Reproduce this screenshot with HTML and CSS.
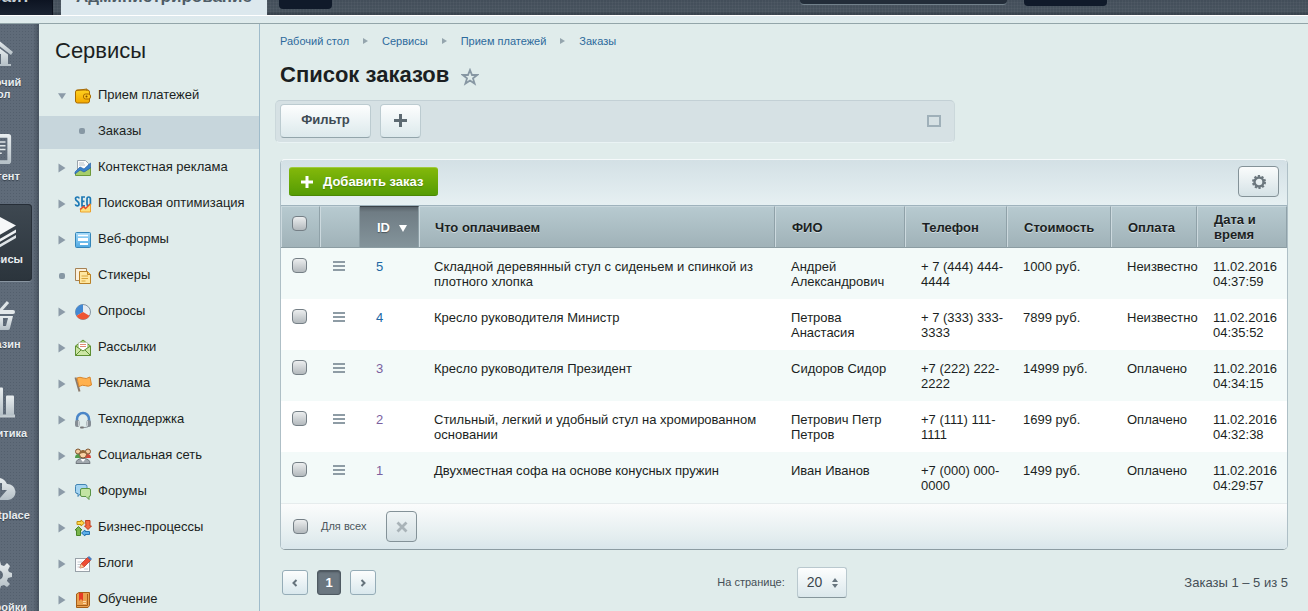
FILE: index.html
```html
<!DOCTYPE html>
<html lang="ru">
<head>
<meta charset="utf-8">
<title>Список заказов</title>
<link rel="stylesheet" href="styles.css">
</head>
<body>
<svg class="defs" aria-hidden="true">
  <defs>
    <linearGradient id="metal" x1="0" y1="0" x2="0" y2="1"><stop offset="0" stop-color="#e9eef0"/><stop offset="1" stop-color="#b4bfc6"/></linearGradient>
    <linearGradient id="gold" x1="0" y1="0" x2="0" y2="1"><stop offset="0" stop-color="#ffd21f"/><stop offset="1" stop-color="#f3a800"/></linearGradient>
    <linearGradient id="sky" x1="0" y1="0" x2="0" y2="1"><stop offset="0" stop-color="#a5dafa"/><stop offset="1" stop-color="#4fa9e2"/></linearGradient>
    <symbol id="tri" viewBox="0 0 8 10"><path d="M0.500 0.500 7.500 5 0.500 9.500Z" fill="#8c9ba8"/></symbol>
  </defs>
</svg>

<header class="top">
  <div class="top-bar">
    <a class="tab tab-site" href="#">Сайт</a>
    <a class="tab tab-admin" href="#">Администрирование</a>
    <span class="slot slot-note"></span>
    <span class="slot slot-search"></span>
    <span class="slot slot-user"></span>
  </div>
  <div class="top-strip"></div>
</header>

<div class="layout">
  <nav class="rail" aria-label="Разделы">
    <a class="rail-item" href="#">
      <svg class="rail-icon h34" width="30" height="26" viewBox="0 0 30 26"><path d="M15 0 30 12 28 15 15 5 2 15 0 12Z" fill="url(#metal)"/><path fill-rule="evenodd" d="M5 14.500 15 7l10 7.500V24h3v2H2v-2h3zM11 24h7V14h-7z" fill="url(#metal)"/></svg>
      <span>Рабочий стол</span>
    </a>
    <a class="rail-item" href="#">
      <svg class="rail-icon h30" width="28" height="32" viewBox="0 0 28 32"><path fill-rule="evenodd" d="M3 0h22q3 0 3 3v26q0 3-3 3H3q-3 0-3-3V3q0-3 3-3zm1 4v24h20V4z" fill="url(#metal)"/><path d="M6 8.500h16M6 12.500h16M6 16.500h16M6 20.500h12" stroke="#dfe5e8" stroke-width="1.600"/></svg>
      <span>Контент</span>
    </a>
    <a class="rail-item active" href="#">
      <svg class="rail-icon h31" width="36" height="31" viewBox="0 0 36 31"><path d="M18 0 36 9.500 18 20 0 9.500Z" fill="#f6f8f9"/><path d="M0 14 18 24 36 13.500v3L18 27 0 17Z" fill="#eef1f3"/><path d="M0 19.500 18 29.500 36 19v3L18 32.500 0 22.500Z" fill="#dde3e6"/></svg>
      <span>Сервисы</span>
    </a>
    <a class="rail-item" href="#">
      <svg class="rail-icon h33" width="34" height="29" viewBox="0 0 34 29"><path d="M6 10 15 1M19 10 27 1" stroke="#dfe5e8" stroke-width="3"/><rect y="9" width="34" height="4" rx="2" fill="#e3e8ea"/><path fill-rule="evenodd" d="M2 15h30l-3 12q0 2-2 2H7q-2 0-2-2zm5 2 2 8h3v-8zm8 0v8h4v-8zm7 0v8h3l2-8z" fill="url(#metal)"/></svg>
      <span>Магазин</span>
    </a>
    <a class="rail-item" href="#">
      <svg class="rail-icon h37" width="34" height="30" viewBox="0 0 34 30"><path d="M1 27h33v3H1z" fill="#c3ccd1"/><rect x="3" y="12" width="8" height="16" rx="1" fill="url(#metal)"/><rect x="14" y="0" width="8" height="28" rx="1" fill="url(#metal)"/><rect x="25" y="8" width="8" height="20" rx="1" fill="url(#metal)"/></svg>
      <span>Аналитика</span>
    </a>
    <a class="rail-item" href="#">
      <svg class="rail-icon h30" width="36" height="24" viewBox="0 0 36 24"><path fill-rule="evenodd" d="M8 24A8 8 0 0 1 7 8 11 11 0 0 1 27 8 7.800 7.800 0 1 1 28 24zM15 7v7h-5l9 9 8-9h-5V7z" fill="url(#metal)"/></svg>
      <span>Marketplace</span>
    </a>
    <a class="rail-item" href="#">
      <svg class="rail-icon h40" width="28" height="28" viewBox="0 0 28 28"><path fill-rule="evenodd" d="M12 0h4l1 4 3 1 3-3 3 3-2 4 1 2 3 1v4l-4 1-1 3 3 3-3 3-3-2-3 1-1 3h-4l-1-3-3-1-3 2-3-3 2-3-1-3-3-1v-4l3-1 1-2-2-4 3-3 3 3 3-1zM14 9a5 5 0 1 0 0 10 5 5 0 0 0 0-10z" fill="url(#metal)"/></svg>
      <span>Настройки</span>
    </a>
  </nav>

  <aside class="side">
    <h2>Сервисы</h2>
    <ul class="menu">
      <li><a href="#"><svg class="mark" width="10" height="8" viewBox="0 0 10 8"><path d="M0 0.500h10L5 8Z" fill="#8c9ba8"/></svg>
        <svg class="ico" viewBox="0 0 18 18"><rect x="1.500" y="3" width="14" height="13" rx="2" fill="url(#gold)" stroke="#a86a00"/><path d="M2 3.500 13 2v2" fill="none" stroke="#a86a00"/><rect x="9.500" y="7" width="7" height="5" rx="2" fill="#ffc61a" stroke="#a86a00"/><circle cx="12.500" cy="9.500" r="1" fill="#7c4c00"/></svg>Прием платежей</a></li>
      <li class="current"><a href="#"><i class="mark-gap"></i><i class="dot"></i>Заказы</a></li>
      <li><a href="#"><svg class="mark" width="8" height="10"><use href="#tri"/></svg>
        <svg class="ico" viewBox="0 0 18 18"><path d="M3.500 1.500h8l3 3v11h-11z" fill="#fbfbfb" stroke="#9aa4ac"/><path d="M5 4h5M5 6h6" stroke="#b9c1c8"/><path d="M1.500 16.500v-3l5-3 4 2 6-4v8z" fill="#a6ce6a" stroke="#6f9a3a"/><path d="M1 13 6 8l4 2 6.500-6v5L10 13 6 11l-5 4z" fill="#3b82cc" stroke="#2a63a6" stroke-width=".7"/></svg>Контекстная реклама</a></li>
      <li><a href="#"><svg class="mark" width="8" height="10"><use href="#tri"/></svg>
        <svg class="ico" viewBox="0 0 18 18"><path d="M5 3.500Q5 2 3.300 2 1.500 2 1.500 3.800 1.500 5.200 3.300 6.300 5 7.500 5 9 5 10.800 3.200 10.800 1.500 10.800 1.400 9.200M11 2H8v8.800h3M8 6.300h2.500M14.700 2q1.700 0 1.700 2v4.800q0 2-1.700 2T13 8.800V4q0-2 1.700-2z" fill="none" stroke="#1c78b4" stroke-width="1.700"/><path d="M6.500 17v-2l3-3 2 1.500L16.500 9v8z" fill="#fddf7c" stroke="#eda22c"/><path d="m6 14.500 3.500-3 2 2L16 9" fill="none" stroke="#e3492b" stroke-width="1.300"/></svg>Поисковая оптимизация</a></li>
      <li><a href="#"><svg class="mark" width="8" height="10"><use href="#tri"/></svg>
        <svg class="ico" viewBox="0 0 18 18"><rect x="1.500" y="1.500" width="15" height="15" rx="1" fill="url(#sky)" stroke="#3485b8"/><path d="M4 4.500h10" stroke="#fff" stroke-width="1.500"/><rect x="4" y="7" width="10" height="3" fill="#fff"/><path d="M6 13h8" stroke="#fff" stroke-width="2"/></svg>Веб-формы</a></li>
      <li><a href="#"><i class="dot"></i>
        <svg class="ico" viewBox="0 0 18 18"><path d="M1.500 1.500h11v12h-11z" fill="#fbf1de" stroke="#a78254"/><path d="M5.500 4.500h8l3 3v9h-11z" fill="#ffe7a0" stroke="#b98127"/><path d="M13.500 4.500v3h3" fill="#ffc74d" stroke="#b98127"/><path d="M7.500 9h6.500M7.500 11.500h6.500M7.500 14h4" stroke="#d8a53c"/></svg>Стикеры</a></li>
      <li><a href="#"><svg class="mark" width="8" height="10"><use href="#tri"/></svg>
        <svg class="ico" viewBox="0 0 18 18"><circle cx="9" cy="9" r="7.500" fill="#e6ecf1" stroke="#8494a2"/><path d="M9 9V1.500A7.500 7.500 0 0 0 2.500 12.700Z" fill="#4389d2"/><path d="M9 9 2.500 12.700A7.500 7.500 0 0 0 15.500 12.700Z" fill="#ee5434"/></svg>Опросы</a></li>
      <li><a href="#"><svg class="mark" width="8" height="10"><use href="#tri"/></svg>
        <svg class="ico" viewBox="0 0 18 18"><path d="M1.500 7 9 1l7.500 6v9.500h-15z" fill="#a8d072" stroke="#5e8f33"/><path d="M4.500 3.500h9v7L9 12l-4.500-2z" fill="#fff" stroke="#b8c2b0" stroke-width=".7"/><path d="M6 5.500h6M6 7.500h6" stroke="#e08b76"/><path d="m1.500 7 7.500 5 7.500-5v9.500h-15z" fill="#cde6a5" stroke="#5e8f33"/><path d="m2 16 5-5M16 16l-5-5" stroke="#5e8f33"/></svg>Рассылки</a></li>
      <li><a href="#"><svg class="mark" width="8" height="10"><use href="#tri"/></svg>
        <svg class="ico" viewBox="0 0 18 18"><path d="m1.500 2.500 4 14" stroke="#8a7a6c" stroke-width="2"/><path d="M3 3q3-1.500 6 0t7-1l1.500 8q-3 2-6 .7t-6.500.8z" fill="#ffb14e" stroke="#d9852a"/></svg>Реклама</a></li>
      <li><a href="#"><svg class="mark" width="8" height="10"><use href="#tri"/></svg>
        <svg class="ico" viewBox="0 0 18 18"><path d="M3 11V8a6 6 0 0 1 12 0v3" fill="none" stroke="#4a86c8" stroke-width="2.500"/><path d="M15 14q0 2.500-5 2.500" fill="none" stroke="#8f979e"/><rect x="1" y="9" width="4.500" height="7" rx="2" fill="#858d94"/><rect x="12.500" y="9" width="4.500" height="7" rx="2" fill="#858d94"/><path d="M4.500 10v5M13.500 10v5" stroke="#c9ced2"/><rect x="6" y="15.500" width="4" height="2" rx="1" fill="#777"/></svg>Техподдержка</a></li>
      <li><a href="#"><svg class="mark" width="8" height="10"><use href="#tri"/></svg>
        <svg class="ico" viewBox="0 0 18 18"><path d="M1 11q0-4 3.500-4T8 11z" fill="#4f9a49"/><path d="M10 11q0-4 3.500-4T17 11z" fill="#d3483a"/><circle cx="4" cy="4.500" r="2.500" fill="#f4c99b" stroke="#7e5632"/><circle cx="14" cy="4.500" r="2.500" fill="#f4c99b" stroke="#7e5632"/><path d="M2 16.500q0-5 7-5t7 5z" fill="#a0a7ad" stroke="#6f767c"/><path d="m6.500 12 2.500 3 2.500-3z" fill="#fff"/><circle cx="9" cy="7.500" r="3.500" fill="#f9d3a6" stroke="#7e5632"/><path d="M5.500 7q.5-4 3.500-4t3.500 4Q10 5 5.500 7z" fill="#96683a"/></svg>Социальная сеть</a></li>
      <li><a href="#"><svg class="mark" width="8" height="10"><use href="#tri"/></svg>
        <svg class="ico" viewBox="0 0 18 18"><path d="M3 1.500h8q2 0 2 2v5q0 2-2 2H6.500L4 13.500v-3H3q-1.500 0-1.500-2v-5q0-2 1.500-2z" fill="#a4d4f1" stroke="#4284b2"/><path d="M8 5.500h7q1.500 0 1.500 1.500v5q0 1.500-1.500 1.500v3l-3-3H8q-1.500 0-1.500-1.500V7Q6.500 5.500 8 5.500z" fill="#c3e4a3" stroke="#5b9546"/></svg>Форумы</a></li>
      <li><a href="#"><svg class="mark" width="8" height="10"><use href="#tri"/></svg>
        <svg class="ico" viewBox="0 0 18 18"><path d="M3 2.500h4V1l3.500 3L7 7V5.500H3z" fill="#ffd64a" stroke="#c18f10"/><path d="M11.500 1.500H16V7h1.500L14 10.500 10.500 7H12z" fill="#f26a42" stroke="#c23c1b"/><path d="M15.500 15.500H11V17l-3.500-3L11 11v1.500h4.500z" fill="#5baee9" stroke="#2674b1"/><path d="M6.500 16.500H2.500V11H1l3.500-3.500L8 11H6.500z" fill="#79b54c" stroke="#4a8428"/></svg>Бизнес-процессы</a></li>
      <li><a href="#"><svg class="mark" width="8" height="10"><use href="#tri"/></svg>
        <svg class="ico" viewBox="0 0 18 18"><rect x="1.500" y="3.500" width="14" height="13" fill="#fdfdfd" stroke="#98a1a8"/><path d="M3.500 7h5M3.500 9.500h4M3.500 12h3M10 14h4" stroke="#c5ccd1"/><path d="m6 13 1-4 6.500-6.500 3 3L10 12z" fill="#ee4d33" stroke="#b32e19" stroke-width=".7"/><path d="m13.500 2.500 1.500-1.500 3 3-1.500 1.500z" fill="#4d7dbd"/><path d="m6 13 1-4 3 3z" fill="#f5cf98"/></svg>Блоги</a></li>
      <li><a href="#"><svg class="mark" width="8" height="10"><use href="#tri"/></svg>
        <svg class="ico" viewBox="0 0 18 18"><path d="M2.500 3 5 1.500h10.500v13L14 16.500H2.500z" fill="#e9a14f" stroke="#a65e18"/><path d="M2.500 14.500h11V3" fill="none" stroke="#a65e18"/><path d="M9 10.500h3M9 12.500h3" stroke="#fbd9a8"/><path d="M5 2h4v8l-2-2-2 2z" fill="#e63a25"/></svg>Обучение</a></li>
    </ul>
  </aside>

  <main class="main">
    <nav class="crumbs" aria-label="Путь">
      <a href="#">Рабочий стол</a><i></i><a href="#">Сервисы</a><i></i><a href="#">Прием платежей</a><i></i><a href="#">Заказы</a>
    </nav>
    <div class="title">
      <h1>Список заказов</h1>
      <button class="star" type="button" aria-label="В избранное"><svg width="18" height="18" viewBox="0 0 18 18"><path d="m9 2 2 5h5.200l-4.200 3.400 1.600 5.200L9 12.500l-4.600 3.100L6 10.400 1.800 7H7z" fill="none" stroke="#8797a3" stroke-width="1.800"/></svg></button>
    </div>

    <div class="filter">
      <button class="btn btn-filter" type="button">Фильтр</button>
      <button class="btn btn-plus" type="button" aria-label="Добавить фильтр"><svg width="13" height="13" viewBox="0 0 13 13"><path d="M5 0h3v5h5v3H8v5H5V8H0V5h5z" fill="#5d6a72"/></svg></button>
      <button class="fold" type="button" aria-label="Развернуть"></button>
    </div>

    <section class="grid">
      <div class="grid-bar">
        <button class="add" type="button"><svg width="12" height="12" viewBox="0 0 12 12"><path d="M4.500 0h3v4.500H12v3H7.500V12h-3V7.500H0v-3h4.500z" fill="#fff"/></svg>Добавить заказ</button>
        <button class="gear" type="button" aria-label="Настроить"><svg width="14" height="14" viewBox="0 0 14 14"><circle cx="7" cy="7" r="6" fill="none" stroke="#6c777e" stroke-width="2" stroke-dasharray="2.200 1.570"/><circle cx="7" cy="7" r="4.500" fill="none" stroke="#6c777e" stroke-width="2.400"/></svg></button>
      </div>
      <table>
        <colgroup><col class="c-check"><col class="c-menu"><col class="c-id"><col><col class="c-name"><col class="c-phone"><col class="c-price"><col class="c-pay"><col class="c-date"></colgroup>
        <thead>
          <tr><th><input type="checkbox" aria-label="Выбрать все"></th><th></th><th class="sorted">ID<svg width="8" height="7" viewBox="0 0 8 7"><path d="M0 0h8L4 7z" fill="#fff"/></svg></th><th>Что оплачиваем</th><th>ФИО</th><th>Телефон</th><th>Стоимость</th><th>Оплата</th><th>Дата и время</th></tr>
        </thead>
        <tbody>
          <tr><td><input type="checkbox" aria-label="Заказ 5"></td><td><button class="burger" type="button" aria-label="Действия"></button></td><td><a href="#">5</a></td><td>Складной деревянный стул с сиденьем и спинкой из плотного хлопка</td><td>Андрей Александрович</td><td>+ 7 (444) 444-4444</td><td>1000 руб.</td><td>Неизвестно</td><td>11.02.2016 04:37:59</td></tr>
          <tr><td><input type="checkbox" aria-label="Заказ 4"></td><td><button class="burger" type="button" aria-label="Действия"></button></td><td><a href="#">4</a></td><td>Кресло руководителя Министр</td><td>Петрова Анастасия</td><td>+ 7 (333) 333-3333</td><td>7899 руб.</td><td>Неизвестно</td><td>11.02.2016 04:35:52</td></tr>
          <tr><td><input type="checkbox" aria-label="Заказ 3"></td><td><button class="burger" type="button" aria-label="Действия"></button></td><td><a class="seen" href="#">3</a></td><td>Кресло руководителя Президент</td><td>Сидоров Сидор</td><td>+7 (222) 222-2222</td><td>14999 руб.</td><td>Оплачено</td><td>11.02.2016 04:34:15</td></tr>
          <tr><td><input type="checkbox" aria-label="Заказ 2"></td><td><button class="burger" type="button" aria-label="Действия"></button></td><td><a class="seen" href="#">2</a></td><td>Стильный, легкий и удобный стул на хромированном основании</td><td>Петрович Петр Петров</td><td>+7 (111) 111-1111</td><td>1699 руб.</td><td>Оплачено</td><td>11.02.2016 04:32:38</td></tr>
          <tr><td><input type="checkbox" aria-label="Заказ 1"></td><td><button class="burger" type="button" aria-label="Действия"></button></td><td><a class="seen" href="#">1</a></td><td>Двухместная софа на основе конусных пружин</td><td>Иван Иванов</td><td>+7 (000) 000-0000</td><td>1499 руб.</td><td>Оплачено</td><td>11.02.2016 04:29:57</td></tr>
        </tbody>
      </table>
      <div class="grid-foot">
        <label><input type="checkbox">Для всех</label>
        <button class="remove" type="button" aria-label="Удалить"><svg width="12" height="12" viewBox="0 0 12 12"><path d="m1.500 1.500 9 9m0-9-9 9" stroke="#a9b3b8" stroke-width="2.800"/></svg></button>
      </div>
    </section>

    <div class="pager">
      <div class="pages">
        <button type="button" aria-label="Назад"><svg width="6" height="8" viewBox="0 0 6 8"><path d="M4.500 1 1.500 4l3 3" fill="none" stroke="#65737c" stroke-width="2"/></svg></button>
        <span class="page">1</span>
        <button type="button" aria-label="Вперед"><svg width="6" height="8" viewBox="0 0 6 8"><path d="m1.500 1 3 3-3 3" fill="none" stroke="#65737c" stroke-width="2"/></svg></button>
      </div>
      <div class="per-page">
        <label for="size">На странице:</label>
        <span class="pick"><select id="size"><option>20</option></select><svg width="6" height="10" viewBox="0 0 6 10"><path d="M0 4 3 0l3 4zM0 6h6l-3 4z" fill="#67757e"/></svg></span>
      </div>
      <div class="total">Заказы 1 – 5 из 5</div>
    </div>
  </main>
</div>
</body>
</html>
```

FILE: styles.css
```css
* { box-sizing: border-box; }

body {
  margin: 0;
  height: 100vh;
  overflow: hidden;
  display: flex;
  flex-direction: column;
  background: #e0eceb;
  color: #1b1f22;
  font: 13px/15px "Liberation Sans", Arial, sans-serif;
}

a { color: inherit; text-decoration: none; }
button, select, input { font: inherit; margin: 0; }
button { padding: 0; cursor: pointer; }
.defs { position: absolute; width: 0; height: 0; }

/* Header */
.top { flex: none; }
.top-bar {
  display: flex;
  align-items: flex-start;
  height: 15px;
  overflow: hidden;
  background:
    repeating-linear-gradient(90deg, rgba(255, 255, 255, .03) 0 1px, transparent 1px 3px),
    repeating-linear-gradient(0deg, rgba(255, 255, 255, .03) 0 1px, transparent 1px 3px),
    linear-gradient(#434e5a, #46525d 11px, #313b47);
}
.top-strip {
  height: 9px;
  background: linear-gradient(#dce8ee, #e0eceb);
  border-top: 1px solid #fff;
  border-bottom: 1px solid #93a5a9;
}
.tab {
  display: flex;
  align-items: flex-end;
  height: 15px;
  padding-bottom: 8px;
  font-size: 17px;
  font-weight: bold;
  line-height: 20px;
  white-space: nowrap;
}
.tab-site {
  justify-content: flex-end;
  width: 53px;
  padding-right: 22px;
  margin-right: 8px;
  background: linear-gradient(#0d1422, #1a2332);
  border-right: 1px solid #0a101c;
  color: #c5cdd3;
}
.tab-admin {
  justify-content: center;
  width: 206px;
  background: #dce8ee;
  color: #4e5c66;
}
.slot { background: #101a2a; border-radius: 0 0 4px 4px; }
.slot-note { width: 53px; height: 9px; margin-left: 12px; }
.slot-search { width: 207px; height: 5px; margin-left: auto; background: #232d39; border-bottom: 1px solid #71808a; }
.slot-user { width: 83px; height: 6px; margin: 0 201px 0 17px; }

.layout { flex: 1; display: flex; min-height: 0; }

/* Section rail */
.rail {
  flex: none;
  display: flex;
  flex-direction: column;
  align-items: flex-end;
  gap: 6px;
  width: 39px;
  padding-right: 7px;
  overflow: hidden;
  background:
    linear-gradient(90deg, transparent 33px, rgba(30, 40, 50, .35)),
    radial-gradient(rgba(30, 40, 55, .18) 1px, transparent 1px) 0 0 / 3px 3px,
    #5f6b79;
}
.rail-item {
  flex: none;
  display: flex;
  flex-direction: column;
  align-items: center;
  gap: 6px;
  width: 68px;
  padding: 12px 0 16px;
  color: #e8edf0;
  font-size: 11px;
  font-weight: bold;
  line-height: 12px;
  text-align: center;
  text-shadow: 0 1px 1px #333d48;
}
.rail-item.active {
  background: linear-gradient(#3e4851, #2b343c);
  border-radius: 4px;
  box-shadow: inset 0 0 0 1px #262e37, 0 1px 0 #8894a0;
}
.rail-icon { overflow: visible; }
.h30 { height: 30px; }
.h31 { height: 31px; }
.h33 { height: 33px; }
.h34 { height: 34px; }
.h37 { height: 37px; }
.h40 { height: 40px; }

/* Services menu */
.side {
  flex: none;
  width: 221px;
  overflow: hidden;
  border-right: 1px solid #9fbbca;
}
.side h2 { margin: 0; padding: 15px 16px 17px; font-size: 22px; font-weight: normal; line-height: 24px; }
.menu { margin: 0; padding: 0; list-style: none; }
.menu li { margin-bottom: 3px; }
.menu a {
  display: flex;
  align-items: center;
  height: 33px;
  padding: 0 0 4px 19px;
}
.menu .current { background: #c7d6dc; }
.mark, .mark-gap, .dot { flex: none; margin-right: 8px; }
.mark, .mark-gap { width: 8px; }
.ico, .mark, .dot { margin-top: 2px; }
.dot { width: 6px; height: 6px; margin-left: 1px; margin-right: 9px; background: #8798a4; border-radius: 2px; }
.mark-gap + .dot { margin: 0 13px 0 5px; }
.ico { flex: none; width: 18px; height: 18px; margin-right: 6px; }

/* Content */
.main { flex: 1; min-width: 0; padding: 10px 20px 0; }
.crumbs { display: flex; align-items: center; color: #2d6a9c; font-size: 11px; line-height: 14px; }
.crumbs i {
  margin: 0 14px;
  border: 3px solid transparent;
  border-left: 5px solid #95a5ad;
  border-right: 0;
}
.title { display: flex; align-items: center; gap: 12px; margin-top: 14px; }
.title h1 { margin: 0; font-size: 22px; line-height: 26px; }
.star { display: flex; padding-top: 4px; border: 0; background: none; }

.filter {
  display: flex;
  align-items: center;
  gap: 9px;
  max-width: 680px;
  height: 43px;
  margin: 12px 0 0 -5px;
  padding: 0 13px 2px 4px;
  background: #d6e1e4;
  border: 1px solid #c8d5d9;
  border-color: #c3d0d5 #cbd8db #eaf3f4;
  border-radius: 5px;
}
.btn {
  display: flex;
  align-items: center;
  justify-content: center;
  height: 34px;
  background: linear-gradient(#fdfefe, #dce9ec);
  border: 1px solid #bccbd0;
  border-bottom-color: #93a5ab;
  border-radius: 4px;
  color: #3f4b54;
  font-weight: bold;
}
.btn-filter { width: 91px; padding-bottom: 3px; }
.btn-plus { width: 41px; }
.fold { width: 14px; height: 12px; margin-left: auto; background: none; border: 2px solid #9fb0b9; }

.grid {
  margin-top: 16px;
  border: 1px solid #aebfc6;
  border-top-color: #f5f9fa;
  border-bottom-color: #8c9ca2;
  border-radius: 5px;
  overflow: hidden;
  background: #fff;
}
.grid-bar {
  display: flex;
  align-items: center;
  justify-content: space-between;
  height: 46px;
  padding: 0 8px 2px;
  background: linear-gradient(#d3e0e5, #e6f0f2);
  border-bottom: 1px solid #9fb3bd;
}
.add {
  display: flex;
  align-items: center;
  gap: 10px;
  height: 29px;
  padding: 0 15px 0 12px;
  background: linear-gradient(#83b80a, #559c04);
  border: 0;
  border-top: 1px solid #9fcb3a;
  border-bottom: 1px solid #4b8704;
  border-radius: 3px;
  color: #fff;
  font-weight: bold;
  text-shadow: 0 1px 1px #4d8106;
}
.gear, .remove {
  display: flex;
  align-items: center;
  justify-content: center;
  background: linear-gradient(#fafcfc, #d5e2e6);
  border: 1px solid #849298;
  border-radius: 4px;
}
.gear { width: 41px; height: 31px; }
.remove { width: 31px; height: 31px; background: linear-gradient(#f0f5f6, #d3dfe3); }

table { width: 100%; border-collapse: separate; border-spacing: 0; table-layout: fixed; }
.c-check { width: 39px; }
.c-menu { width: 40px; }
.c-id { width: 59px; }
.c-name { width: 130px; }
.c-phone { width: 102px; }
.c-price { width: 104px; }
.c-pay { width: 86px; }
.c-date { width: 90px; }

th {
  height: 42px;
  padding: 0 0 0 17px;
  background: linear-gradient(#b7cad0, #a0b2b8);
  border-top: 1px solid #c8d7dc;
  border-right: 1px solid #8fa1a8;
  border-bottom: 1px solid #8b9ca2;
  box-shadow: inset 1px 0 #ccd9de;
  text-align: left;
  text-shadow: 0 1px 0 #cfdce0;
}
th:nth-child(4) { padding-left: 16px; }
th:first-child, td:first-child { padding-left: 11px; }
th:first-child input { margin-bottom: 8px; }
.sorted {
  background: linear-gradient(#586269, #6f7c84 5px, #84949b);
  border-top-color: #3a4248;
  box-shadow: none;
  color: #fff;
  text-shadow: 0 1px 1px #4a555c;
}
.sorted svg { margin-left: 9px; }

td { height: 51px; padding: 11px 0 0 16px; vertical-align: top; }
td:nth-child(2) { padding-left: 13px; }
td:nth-child(4) { padding-left: 15px; }
tbody tr:nth-child(odd) { background: #f3faf9; }
td a { color: #2067a5; }
td a.seen { color: #7b5f9f; }

input[type="checkbox"] {
  appearance: none;
  display: block;
  width: 15px;
  height: 15px;
  background: linear-gradient(#eceeef, #b3b9bd);
  border: 1px solid #757f86;
  border-radius: 4px;
}
td input[type="checkbox"] { margin-top: -1px; }
.burger {
  display: block;
  width: 12px;
  height: 10px;
  margin: 2px 0 0;
  border: 0;
  background: repeating-linear-gradient(#8e9ca5 0 2px, transparent 2px 4px);
}

.grid-foot {
  display: flex;
  align-items: center;
  gap: 20px;
  height: 46px;
  padding: 0 12px;
  background: linear-gradient(#fbfcfc, #e3edef 75%, #d9e6eb);
  border-top: 1px solid #e6eced;
}
.grid-foot label { display: flex; align-items: center; gap: 13px; color: #4c565d; font-size: 11px; }

.pager { display: flex; align-items: center; margin-top: 17px; color: #454f56; }
.pages, .per-page, .total { display: flex; align-items: center; }
.pages { flex: 1 1 0; gap: 9px; padding-left: 2px; }
.pages button, .page {
  display: flex;
  align-items: center;
  justify-content: center;
  width: 26px;
  height: 25px;
  background: linear-gradient(#fcfdfd, #d9e8ed);
  border: 1px solid #95acb7;
  border-radius: 3px;
}
.page {
  width: 24px;
  background: #6b7780;
  border-color: #4f5a62;
  box-shadow: inset 0 1px 2px #475158;
  color: #fff;
  font-weight: bold;
}
.per-page { gap: 12px; padding-right: 6px; font-size: 11px; }
.pick { position: relative; display: flex; }
.pick select {
  appearance: none;
  width: 50px;
  height: 31px;
  padding: 0 8px 1px 9px;
  background: linear-gradient(#fdfefe, #dbe8ec);
  border: 1px solid #b9c8ce;
  border-bottom: 1px solid #86969c;
  border-radius: 3px;
  color: #3c474e;
  font-size: 14px;
}
.pick svg { position: absolute; right: 9px; top: 11px; pointer-events: none; }
.total { flex: 1 1 0; justify-content: flex-end; }
```
